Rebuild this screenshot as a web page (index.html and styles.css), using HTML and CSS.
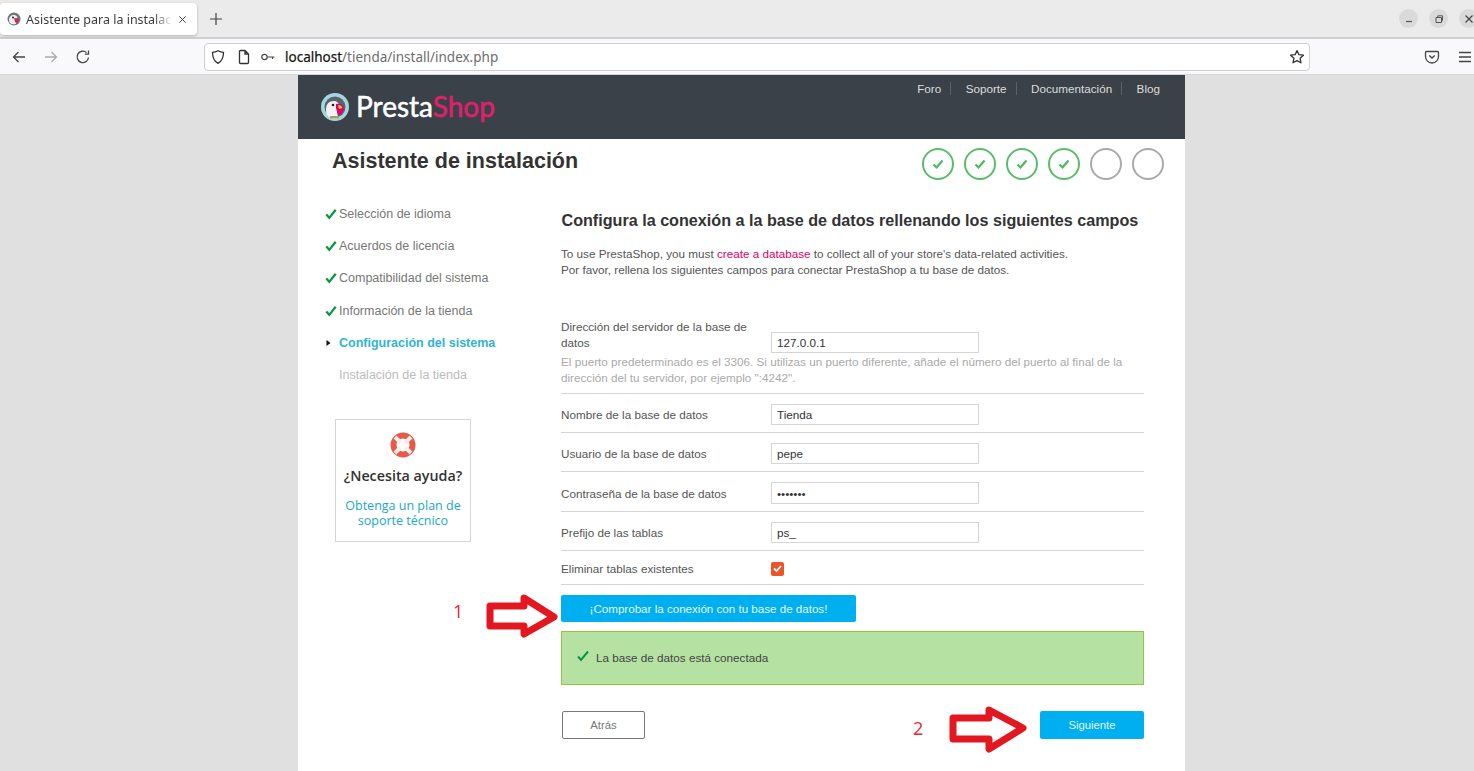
FILE: index.html
```html
<!DOCTYPE html>
<html>
	<head>
		<meta http-equiv="Content-Type" content="text/html; charset=utf-8"/>
		<title>Asistente para la instalación</title>
		<link rel="stylesheet" href="styles.css">
	</head>
	<body>
		<div class="tabbar">
			<div class="tab">
				<svg class="favicon" width="14" height="14" viewBox="0 0 14 14">
					<circle cx="7" cy="7" r="6.5" fill="#6c757c"/>
					<path d="M2 8c0-3 2-5 5-5 2 0 3 1 3.500 2.500L8 7l1 5c-3 1-7 0-7-4z" fill="#f1f1f1"/>
					<path d="M7 6l5 1-1 4-3-1z" fill="#d9264f"/>
					<circle cx="6" cy="5.500" r="1" fill="#222"/>
				</svg>
				<span class="tabtitle">Asistente para la instalac</span>
				<svg class="tabclose" width="9" height="9" viewBox="0 0 10 10"><path d="M1.500 1.500l7 7M8.500 1.500l-7 7" stroke="#444" stroke-width="1.100"/></svg>
			</div>
			<svg class="newtab" width="14" height="14" viewBox="0 0 14 14"><path d="M7 1v12M1 7h12" stroke="#444" stroke-width="1.200"/></svg>
			<div class="winbtns">
				<span class="winbtn"><svg width="10" height="10" viewBox="0 0 10 10"><path d="M2 7.500h6" stroke="#555" stroke-width="1.200"/></svg></span>
				<span class="winbtn"><svg width="10" height="10" viewBox="0 0 10 10"><path d="M2 3.500h5.500v5H2zM3.800 3.500V1.800h4.700v4.700H7.500" fill="none" stroke="#555"/></svg></span>
				<span class="winbtn"><svg width="10" height="10" viewBox="0 0 10 10"><path d="M1.500 1.500l7 7M8.500 1.500l-7 7" stroke="#444" stroke-width="1.200"/></svg></span>
			</div>
		</div>
		<div class="toolbar">
			<svg class="navicon" width="16" height="16" viewBox="0 0 16 16"><path d="M14 8H2.500M7.500 3l-5 5 5 5" fill="none" stroke="#444" stroke-width="1.300"/></svg>
			<svg class="navicon" width="16" height="16" viewBox="0 0 16 16"><path d="M2 8h11.500M8.500 3l5 5-5 5" fill="none" stroke="#aaa" stroke-width="1.300"/></svg>
			<svg class="navicon" width="16" height="16" viewBox="0 0 16 16"><path d="M13.500 8.500A5.700 5.700 0 1 1 11.500 3.500M13.500 1.500v3.700H9.800" fill="none" stroke="#444" stroke-width="1.300"/></svg>
			<div class="urlbar">
				<svg class="urlicon" width="16" height="16" viewBox="0 0 16 16"><path d="M8 1.800c2 1.200 3.800 1.500 5.500 1.500 0 5-1.500 9-5.500 11-4-2-5.500-6-5.500-11 1.700 0 3.500-.3 5.500-1.500z" fill="none" stroke="#333" stroke-width="1.300"/></svg>
				<svg class="urlicon pageicon" width="16" height="16" viewBox="0 0 16 16"><path d="M3.500 2.500a1 1 0 0 1 1-1h4.500l3.500 3.500v8.500a1 1 0 0 1-1 1h-7a1 1 0 0 1-1-1zM9 1.500V5h3.500" fill="none" stroke="#333" stroke-width="1.300"/></svg>
				<svg class="urlicon keyicon" width="16" height="16" viewBox="0 0 16 16"><circle cx="4.500" cy="8" r="2.700" fill="none" stroke="#444" stroke-width="1.200"/><path d="M7.200 8h7.300M12.500 8v2" fill="none" stroke="#444" stroke-width="1.200"/></svg>
				<span class="url"><b>localhost</b>/tienda/install/index.php</span>
				<svg class="star" width="16" height="16" viewBox="0 0 16 16"><path d="M8 1.600l1.900 4.100 4.500.5-3.300 3.100.9 4.500L8 11.600l-4 2.200.9-4.500L1.600 6.200l4.500-.5z" fill="none" stroke="#333" stroke-width="1.300" stroke-linejoin="round"/></svg>
			</div>
			<svg class="pocket" width="16" height="16" viewBox="0 0 16 16"><path d="M2.500 2.500h11a1 1 0 0 1 1 1v4a6.500 6.500 0 0 1-13 0v-4a1 1 0 0 1 1-1zM5.300 6.500L8 9l2.700-2.500" fill="none" stroke="#444" stroke-width="1.300"/></svg>
			<svg class="menuicon" width="14" height="14" viewBox="0 0 14 14"><path d="M1 2.500h12M1 7h12M1 11.500h12" stroke="#444" stroke-width="1.300"/></svg>
		</div>

		<div class="page">
			<div class="sheet">
				<div class="header">
					<div class="logo">
						<svg width="28" height="28" viewBox="0 0 28 28">
							<circle cx="14" cy="14" r="14" fill="#a5d6e0"/>
							<circle cx="14" cy="14" r="10.500" fill="#59656e"/>
							<path d="M5 17c0-6 3-9 8-9 3 0 5 2 5.500 5L16 16l1 9c-5 2-12 0-12-8z" fill="#f2f2f2"/>
							<path d="M15 11c3-1 7 0 8 4l-2 6-4 1-2-7z" fill="#df0067"/>
							<path d="M17 12c2 0 4 1 4.500 3L18 16z" fill="#f7c33b"/>
							<circle cx="12" cy="12" r="1.300" fill="#222"/>
							<path d="M9 23h9v2.500H9z" fill="#b49a63"/>
						</svg>
						<span class="logotext">Presta<span class="logoshop">Shop</span></span>
					</div>
					<ul class="topnav">
						<li>Foro</li>
						<li>Soporte</li>
						<li>Documentación</li>
						<li>Blog</li>
					</ul>
				</div>

				<div class="titlerow">
					<h1>Asistente de instalación</h1>
					<div class="steps">
						<span class="step done"><svg width="14" height="14" viewBox="0 0 14 14"><path d="M2.500 7.500l3 3 6-7" fill="none" stroke="#4cb860" stroke-width="2.200"/></svg></span>
						<span class="step done"><svg width="14" height="14" viewBox="0 0 14 14"><path d="M2.500 7.500l3 3 6-7" fill="none" stroke="#4cb860" stroke-width="2.200"/></svg></span>
						<span class="step done"><svg width="14" height="14" viewBox="0 0 14 14"><path d="M2.500 7.500l3 3 6-7" fill="none" stroke="#4cb860" stroke-width="2.200"/></svg></span>
						<span class="step done"><svg width="14" height="14" viewBox="0 0 14 14"><path d="M2.500 7.500l3 3 6-7" fill="none" stroke="#4cb860" stroke-width="2.200"/></svg></span>
						<span class="step"></span>
						<span class="step"></span>
					</div>
				</div>

				<div class="content">
					<div class="sidebar">
						<ul class="menu">
							<li class="ok"><svg width="12" height="12" viewBox="0 0 14 14"><path d="M1.500 7.500l3.500 4L12.500 2" fill="none" stroke="#0b9444" stroke-width="2.600"/></svg>Selección de idioma</li>
							<li class="ok"><svg width="12" height="12" viewBox="0 0 14 14"><path d="M1.500 7.500l3.500 4L12.500 2" fill="none" stroke="#0b9444" stroke-width="2.600"/></svg>Acuerdos de licencia</li>
							<li class="ok"><svg width="12" height="12" viewBox="0 0 14 14"><path d="M1.500 7.500l3.500 4L12.500 2" fill="none" stroke="#0b9444" stroke-width="2.600"/></svg>Compatibilidad del sistema</li>
							<li class="ok"><svg width="12" height="12" viewBox="0 0 14 14"><path d="M1.500 7.500l3.500 4L12.500 2" fill="none" stroke="#0b9444" stroke-width="2.600"/></svg>Información de la tienda</li>
							<li class="current"><svg width="12" height="12" viewBox="0 0 12 12"><path d="M1.500 3l4 3-4 3z" fill="#111"/></svg>Configuración del sistema</li>
							<li class="todo">Instalación de la tienda</li>
						</ul>
						<div class="helpbox">
							<svg width="26" height="26" viewBox="0 0 26 26">
								<circle cx="13" cy="13" r="9.500" fill="none" stroke="#e8594a" stroke-width="6"/>
								<path d="M5 5l5.500 5.500M21 5l-5.500 5.500M5 21l5.500-5.500M21 21l-5.500-5.500" stroke="#f7eee6" stroke-width="4"/>
							</svg>
							<p class="helptitle">¿Necesita ayuda?</p>
							<p class="helplink">Obtenga un plan de soporte técnico</p>
						</div>
					</div>

					<div class="main">
						<h2>Configura la conexión a la base de datos rellenando los siguientes campos</h2>
						<p class="intro">To use PrestaShop, you must <a class="pinklink">create a database</a> to collect all of your store's data-related activities.<br>Por favor, rellena los siguientes campos para conectar PrestaShop a tu base de datos.</p>

						<div class="row rowserver">
							<div class="rowfields">
								<label>Dirección del servidor de la base de datos</label>
								<input type="text" value="127.0.0.1"/>
							</div>
							<p class="hint">El puerto predeterminado es el 3306. Si utilizas un puerto diferente, añade el número del puerto al final de la dirección del tu servidor, por ejemplo ":4242".</p>
						</div>
						<div class="row">
							<div class="rowfields"><label>Nombre de la base de datos</label><input type="text" value="Tienda"/></div>
						</div>
						<div class="row">
							<div class="rowfields"><label>Usuario de la base de datos</label><input type="text" value="pepe"/></div>
						</div>
						<div class="row">
							<div class="rowfields"><label>Contraseña de la base de datos</label><input type="password" value="1234567"/></div>
						</div>
						<div class="row">
							<div class="rowfields"><label>Prefijo de las tablas</label><input type="text" value="ps_"/></div>
						</div>
						<div class="row rowcheck">
							<div class="rowfields">
								<label>Eliminar tablas existentes</label>
								<span class="checkbox"><svg width="13" height="13" viewBox="0 0 13 13"><path d="M3 6.500l2.500 2.500L10 4" fill="none" stroke="#fff" stroke-width="1.800"/></svg></span>
							</div>
						</div>

						<button type="button" class="btnblue btncheck">¡Comprobar la conexión con tu base de datos!</button>
						<div class="alertok">
							<svg width="12" height="12" viewBox="0 0 12 12"><path d="M1 6.500L4 10l7-8.500" fill="none" stroke="#0b9444" stroke-width="2"/></svg>
							<span>La base de datos está conectada</span>
						</div>

						<div class="footerbtns">
							<button type="button" class="btnback">Atrás</button>
							<button type="button" class="btnblue btnnext">Siguiente</button>
						</div>
					</div>
				</div>
			</div>

			<svg class="arrow arrow1" width="80" height="52" viewBox="0 0 80 52"><path d="M4 12h34V4l30 19-30 17v-8H4z" fill="#fff" stroke="#e3171f" stroke-width="7" stroke-linejoin="round"/></svg>
			<svg class="arrow arrow2" width="84" height="52" viewBox="0 0 84 52"><path d="M4 12h36V4l34 18-34 21V33H4z" fill="#fff" stroke="#e3171f" stroke-width="7" stroke-linejoin="round"/></svg>
			<span class="mark mark1">1</span>
			<span class="mark mark2">2</span>
		</div>
	</body>
</html>
```

FILE: styles.css
```css
html,body{margin:0; padding:0; height:771px; overflow:hidden;}
body{font-family:"Liberation Sans",Arial,sans-serif; background:#e0e0e0;}
h1,h2,p,ul{margin:0; padding:0;}
ul{list-style:none;}

/* browser */
.tabbar{height:37px; background:#ebebeb; display:flex; align-items:center; border-bottom:2px solid #cfcfcf; font-family:"Noto Sans",sans-serif;}
.tab{width:197px; height:32px; margin-top:1px; background:#fff; border-radius:4px; box-shadow:0 1px 3px rgba(0,0,0,.25); display:flex; align-items:center; padding:0 0 0 7px; box-sizing:border-box; flex:none;}
.favicon{flex:none;}
.tabtitle{margin-left:5px; width:150px; flex:none; white-space:nowrap; font-size:12.5px; color:#3c3c3c; -webkit-mask-image:linear-gradient(to right,#000 85%,transparent 98%); mask-image:linear-gradient(to right,#000 85%,transparent 98%);}
.tabclose{margin-left:2px; flex:none;}
.newtab{margin-left:12px;}
.winbtns{margin-left:auto; display:flex; gap:11px; margin-right:-4px;}
.winbtn{width:19px; height:19px; border-radius:50%; background:#dadada; display:flex; align-items:center; justify-content:center;}
.toolbar{height:35px; background:#f9f9fb; border-bottom:1px solid #d8d8d8; display:flex; align-items:center; font-family:"Noto Sans",sans-serif;}
.navicon{margin-left:16px; flex:none;}
.navicon:first-child{margin-left:11px;}
.urlbar{width:1106px; height:28px; box-sizing:border-box; margin-left:113px; background:#fff; border:1px solid #cfcfd3; border-radius:4px; display:flex; align-items:center; padding:0 5px 0 5px; flex:none;}
.urlicon{flex:none; margin-right:10px;}
.pageicon{margin-right:8px;}
.keyicon{margin-right:9px;}
.url{font-size:13.500px; color:#6d6d6d; white-space:nowrap;}
.url b{font-weight:400; color:#111; -webkit-text-stroke:.2px #111;}
.star{margin-left:auto; margin-right:-1px; flex:none;}
.pocket{margin-left:114px; flex:none;}
.menuicon{margin-left:18px; flex:none;}

/* page */
.page{position:relative; height:696px; overflow:hidden;}
.sheet{width:887px; height:696px; margin-left:298px; background:#fff; color:#333;}
.header{height:64px; background:#3a4149; display:flex; justify-content:space-between;}
.logo{display:flex; align-items:center; padding-left:23px; height:64px;}
.logo svg{margin-top:0;}
.logotext{margin-left:7px; margin-top:-2px; font-family:"Lato",sans-serif; font-size:28px; color:#fff; line-height:64px; -webkit-text-stroke:.5px currentColor;}
.logoshop{color:#e0206c;}
.topnav{display:flex; padding:7px 25px 0 0; align-items:flex-start; font-size:11.700px; color:#dcdcdc;}
.topnav li{line-height:14px; padding-right:9px; border-right:1px solid #59616a; margin-right:14.400px; height:13px;}
.topnav li:last-child{padding:0; border:0; margin:0;}

.titlerow{height:56px; display:flex; justify-content:space-between; padding:0 21px 0 34px;}
h1{font-size:21.500px; line-height:44px; color:#333;}
.steps{display:flex; gap:10px; margin-top:9px;}
.step{width:32px; height:32px; box-sizing:border-box; border:2px solid #aaa; border-radius:50%; display:flex; align-items:center; justify-content:center;}
.step.done{border-color:#5bbd6a;}

.content{display:flex;}
.sidebar{width:263px; padding-left:27px; box-sizing:border-box; flex:none;}
.menu{margin-top:3px;}
.menu li{height:32.200px; line-height:32.200px; font-size:12.500px; color:#777; padding-left:14px; position:relative; white-space:nowrap;}
.menu svg{position:absolute; left:0; top:10px;}
.menu .current{color:#2fb5d2; font-weight:bold;}
.menu .todo{color:#bbb;}
.helpbox{width:136px; height:123px; box-sizing:border-box; margin:28px 0 0 10px; border:1px solid #d5d5d5; text-align:center; padding-top:12px; font-family:"Open Sans",sans-serif;}
.helpbox svg{display:block; margin:0 auto;}
.helptitle{font-size:14.300px; font-weight:600; color:#333; margin-top:8px; line-height:20px;}
.helplink{font-size:12.500px; color:#19a9c9; line-height:15px; margin-top:12px; padding:0 8px;}

.main{width:583px;}
h2{font-size:16.150px; line-height:20px; margin-top:14.500px; padding-bottom:.5px; padding-left:.5px; color:#333; white-space:nowrap;}
.intro{font-size:11.700px; line-height:16px; margin-top:16px; color:#555;}
.pinklink{color:#df0067;}
.row{padding:10px 0 7px; border-bottom:1px solid #d5d5d5; font-size:11.700px; color:#555;}
.rowfields{display:flex; align-items:center;}
.rowfields label{width:210px; flex:none;}
.rowfields input{width:208px; height:21.300px; box-sizing:border-box; border:1px solid #d5d5d5; padding:0 5px; margin:0; font:11.700px "Liberation Sans",Arial,sans-serif; color:#333; background:#fff; border-radius:0; outline:0;}
.rowserver{margin-top:41px; padding:0 0 6.500px;}
.rowserver .rowfields{align-items:flex-start;}
.rowserver label{line-height:16px; padding-bottom:2px;}
.rowserver input{margin-top:13px;}
.hint{color:#aaa; line-height:16px; margin-top:1px;}
.rowcheck{padding:11px 0 8px;}
.checkbox{width:13px; height:14px; background:#e8562a; border-radius:2px; display:block;}
.checkbox svg{display:block;}
.btnblue{background:#00aff0; color:#e4f6fd; border:0; border-radius:2px; height:28px; font:11.300px "Liberation Sans",Arial,sans-serif; padding:0; margin:0; display:block;}
.btncheck{width:295px; height:27.500px; margin-top:10px; font-size:11.600px;}
.alertok{height:54px; box-sizing:border-box; margin-top:8.500px; background:#b5e2a3; border:1px solid #8dc83f; display:flex; align-items:center; padding-left:15px; font-size:11.700px; color:#444;}
.alertok svg{margin-top:-4px;}
.alertok span{margin-left:7px;}
.footerbtns{display:flex; justify-content:space-between; margin-top:26px;}
.btnback{width:83px; height:28px; margin-left:1px; box-sizing:border-box; background:#fff; border:1px solid #777; border-radius:2px; color:#777; font:11.300px "Liberation Sans",Arial,sans-serif; padding:0;}
.btnnext{width:104px;}

/* hand drawn notes on top of the screenshot */
.arrow{position:absolute;}
.arrow1{left:486px; top:519px;}
.arrow2{left:949px; top:631px;}
.mark{position:absolute; font:18px "Open Sans",sans-serif; color:#e3292f; line-height:20px;}
.mark1{left:453px; top:526px;}
.mark2{left:913px; top:643px;}
```
